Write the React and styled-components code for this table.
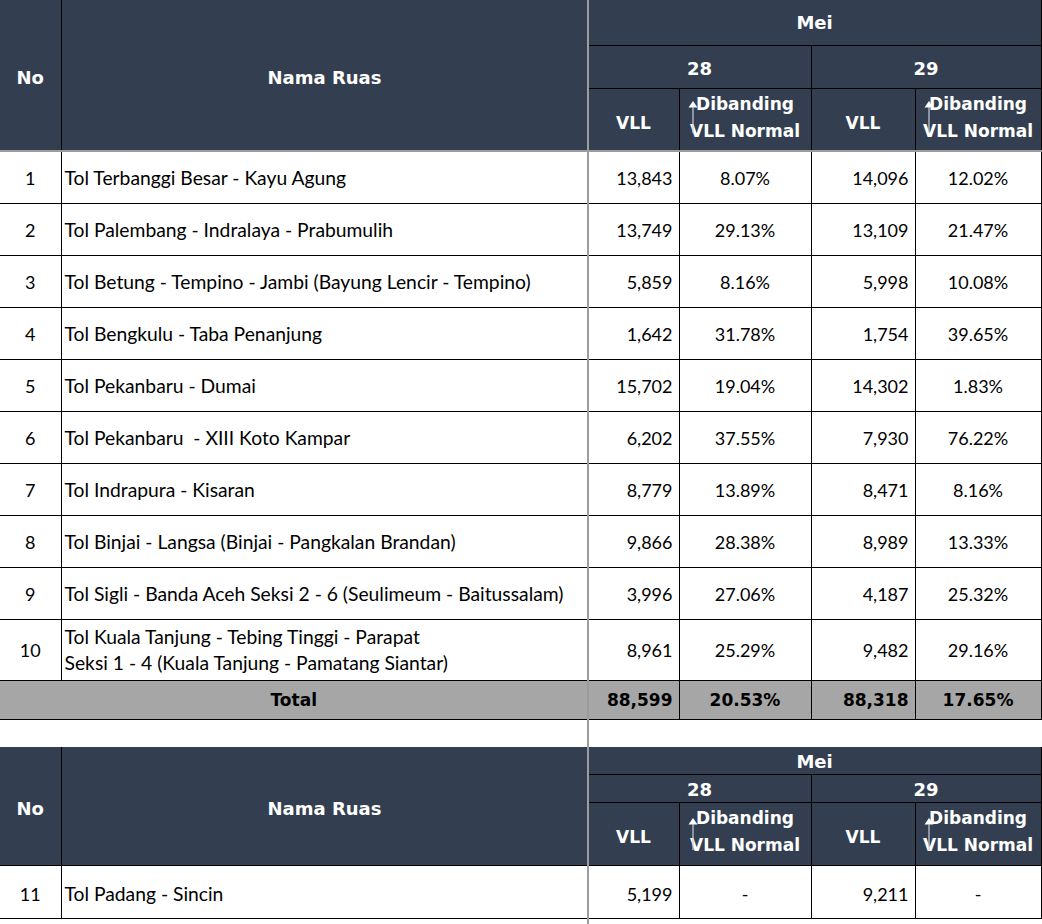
import React from "react";
import styled, { createGlobalStyle } from "styled-components";

const GlobalStyle = createGlobalStyle`
  html, body {
    margin: 0;
    padding: 0;
    background: #ffffff;
  }
  body {
    font-family: "Lato", "Liberation Sans", sans-serif;
    color: #000000;
  }
`;

const Sheet = styled.div`
  position: relative;
  width: 1042px;
  height: 924px;
  overflow: hidden;
  background: #ffffff;

  /* frozen-pane divider, drawn over the grid */
  &::after {
    content: "";
    position: absolute;
    top: 0;
    bottom: 0;
    left: 587px;
    width: 2px;
    background: #9c9c9c;
  }
`;

const Grid = styled.table`
  width: 1041px;
  border-collapse: collapse;
  table-layout: fixed;
  margin-top: ${(p) => p.$gap || 0}px;
`;

const HeadCell = styled.th`
  position: relative;
  height: ${(p) => p.$h}px;
  padding: ${(p) => p.$pt || 0}px 2px 0;
  background: #333f50;
  color: #ffffff;
  font-family: "DejaVu Sans", "Verdana", sans-serif;
  font-weight: 700;
  font-size: ${(p) => p.$size || 17}px;
  line-height: ${(p) => p.$lh || 20}px;
  text-align: center;
  vertical-align: ${(p) => (p.$top ? "top" : "middle")};
  border: 1px solid #000000;
  border-left: ${(p) => (p.$first ? "none" : "1px solid #000000")};
  border-top: none;
  border-bottom: ${(p) => (p.$freeze ? "2px solid #9c9c9c" : "1px solid #000000")};
  white-space: nowrap;
`;

const Cell = styled.td`
  height: ${(p) => p.$h || 51}px;
  padding: ${(p) => p.$pt || 0}px ${(p) => (p.$align === "right" ? 6 : 3)}px 0 3px;
  font-size: 18px;
  line-height: 26px;
  text-align: ${(p) => p.$align || "center"};
  vertical-align: middle;
  border: 1px solid #000000;
  border-left: ${(p) => (p.$first ? "none" : "1px solid #000000")};
  white-space: pre;
  overflow: hidden;
`;

const NameCell = styled(Cell)`
  font-size: 19.3px;
`;

const TotalCell = styled(Cell)`
  background: #a6a6a6;
  font-family: "DejaVu Sans", "Verdana", sans-serif;
  font-weight: 700;
  font-size: 17px;
`;

const Arrow = styled.svg`
  position: absolute;
  left: 8px;
  top: ${(p) => p.$top}px;
  width: 10px;
  height: ${(p) => p.$len}px;
`;

const TrendHead = ({ compact }) => {
  const len = 32;
  return (
    <HeadCell
      $top
      $h={compact ? 60 : 59}
      $pt={2}
      $lh={27}
      $freeze={!compact}
    >
      <Arrow $top={compact ? 15 : 12} $len={len} viewBox={`0 0 10 ${len}`}>
        <polygon points="5,0 9.5,6.5 0.5,6.5" fill="#ffffff" />
        <line x1="5" y1="6" x2="5" y2={len} stroke="#c9ced6" strokeWidth="1.2" />
      </Arrow>
      Dibanding
      <br />
      VLL Normal
    </HeadCell>
  );
};

const rows = [
  ["1", "Tol Terbanggi Besar - Kayu Agung", "13,843", "8.07%", "14,096", "12.02%"],
  ["2", "Tol Palembang - Indralaya - Prabumulih", "13,749", "29.13%", "13,109", "21.47%"],
  ["3", "Tol Betung - Tempino - Jambi (Bayung Lencir - Tempino)", "5,859", "8.16%", "5,998", "10.08%"],
  ["4", "Tol Bengkulu - Taba Penanjung", "1,642", "31.78%", "1,754", "39.65%"],
  ["5", "Tol Pekanbaru - Dumai", "15,702", "19.04%", "14,302", "1.83%"],
  ["6", "Tol Pekanbaru  - XIII Koto Kampar", "6,202", "37.55%", "7,930", "76.22%"],
  ["7", "Tol Indrapura - Kisaran", "8,779", "13.89%", "8,471", "8.16%"],
  ["8", "Tol Binjai - Langsa (Binjai - Pangkalan Brandan)", "9,866", "28.38%", "8,989", "13.33%"],
  ["9", "Tol Sigli - Banda Aceh Seksi 2 - 6 (Seulimeum - Baitussalam)", "3,996", "27.06%", "4,187", "25.32%"],
  [
    "10",
    "Tol Kuala Tanjung - Tebing Tinggi - Parapat\nSeksi 1 - 4 (Kuala Tanjung - Pamatang Siantar)",
    "8,961",
    "25.29%",
    "9,482",
    "29.16%",
  ],
];

const Cols = () => (
  <colgroup>
    <col style={{ width: 61 }} />
    <col style={{ width: 527 }} />
    <col style={{ width: 91 }} />
    <col style={{ width: 132 }} />
    <col style={{ width: 104 }} />
    <col style={{ width: 126 }} />
  </colgroup>
);

const Header = ({ compact }) => {
  const freeze = !compact;
  return (
    <thead>
      <tr>
        <HeadCell $first rowSpan={3} $size={18} $pt={5} $freeze={freeze}>No</HeadCell>
        <HeadCell rowSpan={3} $size={18} $pt={5} $freeze={freeze}>Nama Ruas</HeadCell>
        <HeadCell colSpan={4} $size={18} $pt={compact ? 2 : 0} $h={compact ? 25 : 45}>
          Mei
        </HeadCell>
      </tr>
      <tr>
        <HeadCell colSpan={2} $size={18} $pt={3} $h={compact ? 24 : 39}>28</HeadCell>
        <HeadCell colSpan={2} $size={18} $pt={3} $h={compact ? 24 : 39}>29</HeadCell>
      </tr>
      <tr>
        <HeadCell $h={compact ? 56 : 55} $pt={6} $freeze={freeze}>VLL</HeadCell>
        <TrendHead compact={compact} />
        <HeadCell $h={compact ? 56 : 55} $pt={6} $freeze={freeze}>VLL</HeadCell>
        <TrendHead compact={compact} />
      </tr>
    </thead>
  );
};

const DataRow = ({ r, h, pt }) => (
  <tr>
    <Cell $first $h={h} $pt={pt}>{r[0]}</Cell>
    <NameCell $align="left" $h={h} $pt={pt}>{r[1]}</NameCell>
    <Cell $align="right" $h={h} $pt={pt}>{r[2]}</Cell>
    <Cell $h={h} $pt={pt}>{r[3]}</Cell>
    <Cell $align="right" $h={h} $pt={pt}>{r[4]}</Cell>
    <Cell $h={h} $pt={pt}>{r[5]}</Cell>
  </tr>
);

export default function App() {
  return (
    <>
      <GlobalStyle />
      <Sheet>
        <Grid>
          <Cols />
          <Header />
          <tbody>
            {rows.map((r) => (
              <DataRow key={r[0]} r={r} h={r[0] === "10" ? 60 : 51} />
            ))}
            <tr>
              <TotalCell $first colSpan={2} $h={38}>Total</TotalCell>
              <TotalCell $align="right" $h={38}>88,599</TotalCell>
              <TotalCell $h={38}>20.53%</TotalCell>
              <TotalCell $align="right" $h={38}>88,318</TotalCell>
              <TotalCell $h={38}>17.65%</TotalCell>
            </tr>
          </tbody>
        </Grid>
        <Grid $gap={27}>
          <Cols />
          <Header compact />
          <tbody>
            <DataRow r={["11", "Tol Padang - Sincin", "5,199", "-", "9,211", "-"]} h={49} pt={3} />
          </tbody>
        </Grid>
      </Sheet>
    </>
  );
}
